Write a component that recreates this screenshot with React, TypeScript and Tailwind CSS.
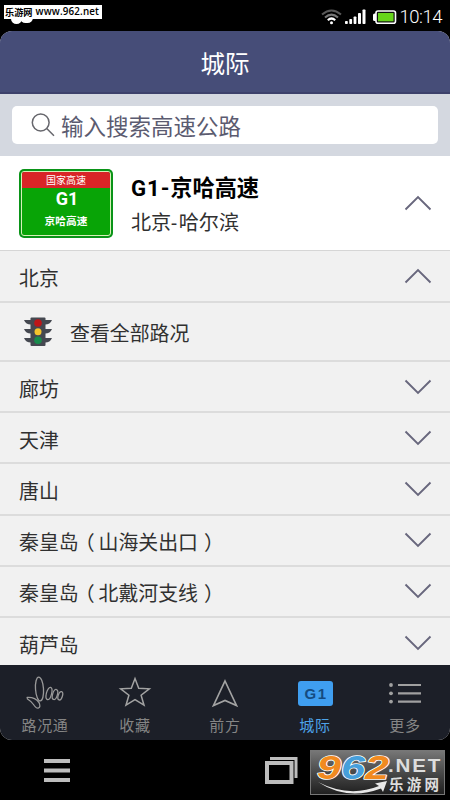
import React, { useState } from "react";

interface ICity {
  name: string;
  note?: string;
}

const cities: ICity[] = [
  { name: "廊坊" },
  { name: "天津" },
  { name: "唐山" },
  { name: "秦皇岛", note: "山海关出口" },
  { name: "秦皇岛", note: "北戴河支线" },
  { name: "葫芦岛" },
];

const Chevron = ({ up = false }: { up?: boolean }) => (
  <svg width="28" height="16" viewBox="0 0 28 16" fill="none" stroke="#68677d" strokeWidth="1.9" className="shrink-0">
    <path d={up ? "M1.5 14.5 14 2 26.5 14.5" : "M1.5 1.5 14 14 26.5 1.5"}/>
  </svg>
);

const StatusBar = () => (
  <div className="relative h-[31px] shrink-0 flex items-center justify-end pr-2 pt-[3px] text-white">
    <div className="absolute left-[11px] top-[12px] w-[11px] h-[12px] rounded-full bg-white"/>
    <div className="absolute left-[20px] top-[12px] w-[13px] h-[11px] rounded-full bg-white"/>
    <div className="absolute left-1 top-[5px] w-[98px] h-[14px] bg-white text-black flex items-center pl-[1px] font-bold whitespace-nowrap">
      <span className="text-[9.2px] leading-[14px]">乐游网</span>
      <span className="ml-[3px] font-['Open_Sans'] font-semibold text-[9.8px] leading-[14px] tracking-[0.15px]">www.962.net</span>
    </div>
    <svg width="76" height="18" viewBox="0 0 76 18" className="mr-[3px]">
      <g fill="none" strokeWidth="2">
        <path d="M1 6.5Q10.5-1.5 20 6.5" stroke="#595959"/>
        <path d="M4 9.5Q10.5 3.8 17 9.5" stroke="#777"/>
        <path d="M6.8 12.2Q10.5 8.8 14.2 12.2" stroke="#fff" strokeWidth="2.2"/>
      </g>
      <circle cx="10.5" cy="14.7" r="1.5" fill="#fff"/>
      <g fill="#fff">
        <rect x="24" y="13" width="2.8" height="3" rx="0.8"/>
        <rect x="28.3" y="11" width="2.8" height="5" rx="0.8"/>
        <rect x="32.6" y="8.5" width="2.8" height="7.5" rx="0.8"/>
        <rect x="37" y="5" width="3" height="11" rx="0.8"/>
        <rect x="41.5" y="1.5" width="3" height="14.5" rx="0.8"/>
      </g>
      <rect x="52" y="5.5" width="4" height="7.5" rx="1.5" fill="#fff"/>
      <rect x="55" y="3" width="19.5" height="12.3" rx="2" fill="#111" stroke="#fff" strokeWidth="1.6"/>
      <rect x="57" y="5" width="15.5" height="8.3" fill="#67d51b"/>
    </svg>
    <span className="font-['Roboto'] font-light text-[18.5px] leading-none tracking-[-0.5px]">10:14</span>
  </div>
);

const SearchBar = () => (
  <div className="h-[62px] shrink-0 bg-[#d4d8e0] px-3 pt-3">
    <div className="h-[38px] rounded-[5px] bg-white flex items-center pl-[19px]">
      <svg width="24" height="24" viewBox="0 0 24 24" fill="none" stroke="#67676d" strokeWidth="1.5">
        <circle cx="9.7" cy="9.5" r="8.4"/>
        <path d="m15.7 15.5 7.3 7.2"/>
      </svg>
      <span className="ml-[6px] text-[22.5px] leading-none text-[#5b5b70]">输入搜索高速公路</span>
    </div>
  </div>
);

const HighwaySign = () => (
  <div className="w-[94px] h-[69px] rounded-[5px] bg-[#0a9418] p-[2px]">
    <div className="h-full rounded-[3px] border border-[#d8f0b8] bg-[#08a406] overflow-hidden flex flex-col items-center text-white">
      <div className="w-full h-4 bg-[#d92427] text-center text-[10px] leading-[16px]">国家高速</div>
      <div className="pl-[2px] font-['Roboto'] font-bold text-[18px] leading-[21px]">G1</div>
      <div className="mt-[3px] text-[10.7px] leading-[18px] font-bold">京哈高速</div>
    </div>
  </div>
);

const TrafficLight = () => (
  <svg width="28" height="30" viewBox="0 0 28 30">
    <g fill="#454850">
      <path d="M0 3H8V7.5Q2 8 0 3ZM28 3H20V7.5Q26 8 28 3Z"/>
      <path d="M0 12H8V16.5Q2 17 0 12ZM28 12H20V16.5Q26 17 28 12Z"/>
      <path d="M0 21H8V25.5Q2 26 0 21ZM28 21H20V25.5Q26 26 28 21Z"/>
      <rect x="6.5" y="0.5" width="15" height="28.5" rx="1"/>
    </g>
    <circle cx="14" cy="6" r="3.8" fill="#bd1518"/>
    <circle cx="14" cy="14.7" r="3.5" fill="#f5c42c"/>
    <circle cx="14" cy="23.2" r="3.8" fill="#198b4c"/>
  </svg>
);

const CityRow = ({ city, open }: { city: ICity; open?: boolean }) => (
  <div className={`${open ? "h-[52px]" : "h-[51.2px]"} shrink-0 border-b-2 border-[#dcdcdc] flex items-center justify-between pl-[19px] pr-[18px]`}>
    <span className="text-[19.9px] leading-none pt-[4px]">
      {city.name}
      {city.note && (
        <>
          <span className="inline-block -translate-x-1">（</span>
          {city.note}
          <span className="inline-block translate-x-1.5">）</span>
        </>
      )}
    </span>
    <Chevron up={open}/>
  </div>
);

const tabs = [
  {
    label: "路况通",
    icon: (
      <svg width="38" height="34" viewBox="0 0 38 34" fill="none" stroke="#999" strokeWidth="1.3">
        <ellipse cx="13.5" cy="13" rx="4" ry="12" transform="rotate(-4 13.5 13)"/>
        <path d="M1.2 21.5Q9 21 13 26.5Q15 31 12.5 32Q10.5 33 7.5 28.5Q5.5 25.5 1.5 23Z"/>
        <ellipse cx="23" cy="17.5" rx="2.6" ry="6.2" transform="rotate(14 23 17.5)"/>
        <ellipse cx="29" cy="18.5" rx="2.4" ry="5.2" transform="rotate(16 29 18.5)"/>
        <ellipse cx="34.3" cy="19.8" rx="2.1" ry="4.3" transform="rotate(18 34.3 19.8)"/>
      </svg>
    ),
  },
  {
    label: "收藏",
    icon: (
      <svg width="34" height="34" viewBox="0 0 34 34" fill="none" stroke="#a2a2a2" strokeWidth="1.5">
        <path d="M17 2.5 20.7 12.3 31.3 12.8 23.1 19.2 26 29.2 17 23.6 8 29.2 10.9 19.2 2.7 12.8 13.3 12.3Z"/>
      </svg>
    ),
  },
  {
    label: "前方",
    icon: (
      <svg width="34" height="34" viewBox="0 0 34 34" fill="none" stroke="#a2a2a2" strokeWidth="1.7">
        <path d="M17 5 28.5 29.5 17 24.5 5.5 29.5Z"/>
      </svg>
    ),
  },
  {
    label: "城际",
    icon: (
      <span className="w-[35px] h-[25px] mt-[5px] rounded-[3px] bg-[#3f9ef0] text-[#154b80] font-['Liberation_Sans'] font-bold text-[15px] leading-[26px] text-center tracking-[1.5px] pl-[2px]">
        G1
      </span>
    ),
  },
  {
    label: "更多",
    icon: (
      <svg width="34" height="34" viewBox="0 0 34 34" fill="#a0a0a0">
        <circle cx="3" cy="9" r="1.9"/>
        <circle cx="3" cy="17.3" r="1.9"/>
        <circle cx="3" cy="25.6" r="1.9"/>
        <path d="M10 7.9H33V10.1H10ZM10 16.2H33V18.4H10ZM10 24.5H33V26.7H10Z"/>
      </svg>
    ),
  },
];

const SiteBadge = () => (
  <div className="absolute left-[310px] top-[10px] w-[135px] h-[45px] border border-[#777] bg-linear-to-b from-[#777] to-[#202020]">
    <svg width="133" height="43" viewBox="0 0 133 43" className="overflow-visible">
      <g
        fontFamily="Liberation Sans"
        fontWeight="bold"
        fontStyle="italic"
        fontSize="34"
        stroke="#fff"
        strokeWidth="1.6"
        strokeLinejoin="round"
        paintOrder="stroke"
      >
        <text x="6" y="27.5" textLength="24" lengthAdjust="spacingAndGlyphs" fill="#f18a20">9</text>
        <text x="30" y="27.5" textLength="24" lengthAdjust="spacingAndGlyphs" fill="#469fdb">6</text>
        <text x="54" y="27.5" textLength="24" lengthAdjust="spacingAndGlyphs" fill="#f18a20">2</text>
      </g>
      <path d="M7 31Q38 47 68 35L64 32.5 76 30 72 41 70 37.500Q36 50 7 31Z" fill="#e8e8e8"/>
      <text x="77" y="20.5" textLength="54" lengthAdjust="spacingAndGlyphs" letterSpacing="1.5" fontFamily="Liberation Sans" fontWeight="bold" fontSize="17.5" fill="#ddd">.NET</text>
      <text x="78" y="38.5" textLength="50" lengthAdjust="spacing" fontFamily="Noto Sans CJK SC" fontWeight="bold" fontSize="14.5" fill="#ddd">乐游网</text>
    </svg>
  </div>
);

const App = () => {
  const [active, setActive] = useState("城际");

  return (
    <div className="w-[450px] h-[800px] bg-black overflow-hidden flex flex-col font-['Noto_Sans_CJK_SC',sans-serif] text-[#303030]">
      <StatusBar/>
      <main className="h-[709px] shrink-0 rounded-[12px] overflow-hidden flex flex-col bg-[#f1f1f1]">
        <header className="h-[63px] shrink-0 bg-[#464d78] border-b-2 border-[#3d416b] flex items-center justify-center text-white text-[24.5px] leading-none pt-[3px]">
          城际
        </header>
        <SearchBar/>
        <section className="h-[95px] shrink-0 bg-white border-b border-[#d6d6d6] flex items-center pl-[19px] pr-[18px]">
          <HighwaySign/>
          <div className="ml-[18px] flex-1 pt-[2px]">
            <h2 className="text-[22.2px] leading-[34px] font-bold text-black">
              <span className="font-['Roboto'] tracking-[0.9px]">G1-</span>京哈高速
            </h2>
            <p className="text-[20.1px] leading-[34px]">
              北京<span className="font-['Roboto'] tracking-[2px]">-</span>哈尔滨
            </p>
          </div>
          <Chevron up/>
        </section>
        <div className="flex-1 min-h-0 overflow-hidden flex flex-col">
          <CityRow city={{ name: "北京" }} open/>
          <div className="h-[59px] shrink-0 border-b-2 border-[#dcdcdc] flex items-center pl-6 gap-[18px]">
            <TrafficLight/>
            <span className="text-[19.9px] leading-none pt-[2px]">查看全部路况</span>
          </div>
          {cities.map((city, i) => <CityRow key={i} city={city}/>)}
        </div>
        <nav className="h-[75px] shrink-0 bg-[#1c1f28] grid grid-cols-5">
          {tabs.map(tab => (
            <button key={tab.label} className="flex flex-col items-center pt-[11px]" onClick={() => setActive(tab.label)}>
              <span className="h-[34px] flex items-start">{tab.icon}</span>
              <span
                className={`mt-[6px] text-[15px] leading-[18px] tracking-[0.7px] ${active === tab.label ? "text-[#4da3e8]" : "text-[#858585]"}`}
              >
                {tab.label}
              </span>
            </button>
          ))}
        </nav>
      </main>
      <footer className="relative h-[60px] shrink-0">
        <svg width="300" height="60" viewBox="0 0 300 60" fill="#bdbdbd">
          <path d="M44 19H70V23H44ZM44 28.5H70V32.5H44ZM44 38H70V42H44Z"/>
          <path d="M270 17H297.5V38H294.5V20H270Z"/>
          <path d="M265 21H293.5V44H265ZM269 25V40H289.5V25Z" fillRule="evenodd"/>
        </svg>
        <SiteBadge/>
      </footer>
    </div>
  );
};

export default App;
